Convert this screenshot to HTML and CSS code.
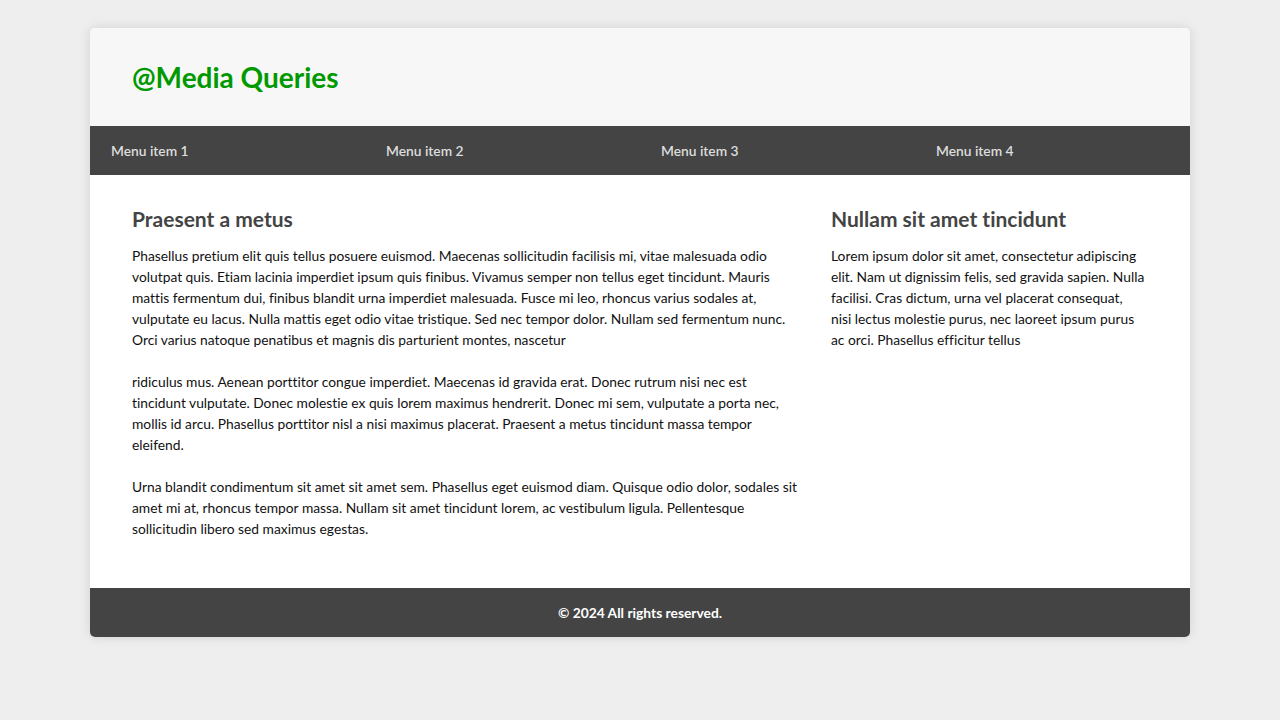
FILE: index.html
```html
<!DOCTYPE html>
<html lang="en">
<head>
<meta charset="utf-8">
<title>@Media Queries</title>
<link rel="stylesheet" href="styles.css">
</head>
<body>
<div class="page">
  <header class="site-header">
    <h1 class="logo">@Media Queries</h1>
  </header>
  <nav class="menu">
    <a class="menu-item" href="#">Menu item 1</a>
    <a class="menu-item" href="#">Menu item 2</a>
    <a class="menu-item" href="#">Menu item 3</a>
    <a class="menu-item" href="#">Menu item 4</a>
  </nav>
  <main class="main">
    <section class="content">
      <h2 class="title">Praesent a metus</h2>
      <p>Phasellus pretium elit quis tellus posuere euismod. Maecenas sollicitudin facilisis mi, vitae malesuada odio volutpat quis. Etiam lacinia imperdiet ipsum quis finibus. Vivamus semper non tellus eget tincidunt. Mauris mattis fermentum dui, finibus blandit urna imperdiet malesuada. Fusce mi leo, rhoncus varius sodales at, vulputate eu lacus. Nulla mattis eget odio vitae tristique. Sed nec tempor dolor. Nullam sed fermentum nunc. Orci varius natoque penatibus et magnis dis parturient montes, nascetur</p>
      <p>ridiculus mus. Aenean porttitor congue imperdiet. Maecenas id gravida erat. Donec rutrum nisi nec est tincidunt vulputate. Donec molestie ex quis lorem maximus hendrerit. Donec mi sem, vulputate a porta nec, mollis id arcu. Phasellus porttitor nisl a nisi maximus placerat. Praesent a metus tincidunt massa tempor eleifend.</p>
      <p>Urna blandit condimentum sit amet sit amet sem. Phasellus eget euismod diam. Quisque odio dolor, sodales sit amet mi at, rhoncus tempor massa. Nullam sit amet tincidunt lorem, ac vestibulum ligula. Pellentesque sollicitudin libero sed maximus egestas.</p>
    </section>
    <aside class="sidebar">
      <h2 class="title">Nullam sit amet tincidunt</h2>
      <p>Lorem ipsum dolor sit amet, consectetur adipiscing elit. Nam ut dignissim felis, sed gravida sapien. Nulla facilisi. Cras dictum, urna vel placerat consequat, nisi lectus molestie purus, nec laoreet ipsum purus ac orci. Phasellus efficitur tellus</p>
    </aside>
  </main>
  <footer class="site-footer">© 2024 All rights reserved.</footer>
</div>
</body>
</html>
```
FILE: styles.css
```css
* { box-sizing: border-box; }

html, body {
  margin: 0;
  padding: 0;
}

body {
  background: #eeeeee;
  font-family: Lato, "Open Sans", "Liberation Sans", sans-serif;
  font-variant-ligatures: none;
  color: #111;
  padding: 28px 0 40px;
}

.page {
  width: 1100px;
  margin: 0 auto;
  background: #fff;
  border-radius: 5px;
  box-shadow: 0 0 12px rgba(0, 0, 0, 0.12);
  overflow: hidden;
}

.site-header {
  background: #f7f7f7;
  height: 98px;
  padding: 0 42px;
  display: flex;
  align-items: center;
}

.logo {
  margin: 0;
  font-size: 28px;
  font-weight: 700;
  color: #009900;
  line-height: 1;
}

.menu {
  background: #444;
  height: 49px;
  display: grid;
  grid-template-columns: repeat(4, 1fr);
  align-items: center;
}

.menu-item {
  padding-left: 21px;
  color: #dddddd;
  text-decoration: none;
  font-size: 13.8px;
  font-weight: 600;
}

.main {
  display: grid;
  grid-template-columns: 1fr 314px;
  column-gap: 30px;
  padding: 32px 45px 49px 42px;
}

.title {
  margin: 0 0 14px;
  font-size: 21px;
  font-weight: 700;
  color: #444;
  line-height: 24px;
}

.main p {
  margin: 0 0 21px;
  font-size: 13.8px;
  line-height: 21px;
}

.main p:last-child {
  margin-bottom: 0;
}

.site-footer {
  background: #444;
  height: 49px;
  display: flex;
  align-items: center;
  justify-content: center;
  color: #fff;
  font-size: 13.8px;
  font-weight: 700;
}
```
